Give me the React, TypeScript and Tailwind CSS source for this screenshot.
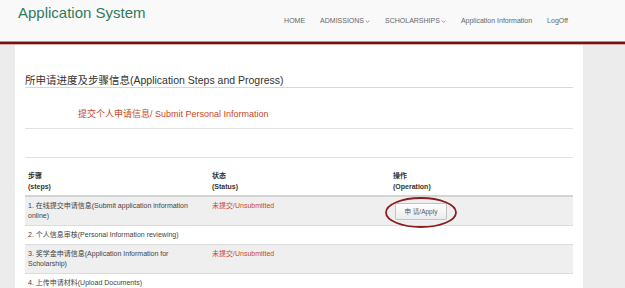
import React from "react";

const font = {
  fontFamily: '"Liberation Sans", Arial, "Noto Sans CJK SC", sans-serif',
};

const navItems = [
  { label: "HOME", caret: false },
  { label: "ADMISSIONS", caret: true },
  { label: "SCHOLARSHIPS", caret: true },
  { label: "Application Information", caret: false },
  { label: "LogOff", caret: false },
];

const rows = [
  {
    step: "1. 在线提交申请信息(Submit application information online)",
    status: "未提交/Unsubmitted",
    action: true,
  },
  { step: "2. 个人信息审核(Personal Information reviewing)", status: "", action: false },
  {
    step: "3. 奖学金申请信息(Application Information for Scholarship)",
    status: "未提交/Unsubmitted",
    action: false,
  },
  { step: "4. 上传申请材料(Upload Documents)", status: "", action: false },
];

function Caret() {
  return (
    <svg viewBox="0 0 8 5" className="ml-[1px] inline-block h-[3px] w-[5px] align-middle">
      <path d="M1 1l3 3 3-3" fill="none" stroke="#777" strokeWidth="1.2" />
    </svg>
  );
}

export default function App() {
  return (
    <div className="h-[288px] w-[625px] overflow-hidden bg-white" style={font}>
      <header className="flex h-[41px] items-start justify-between bg-[#f9f9f9] pl-[18px] pr-[57px]">
        <h1 className="mt-[4px] text-[15px] leading-[17px] text-[#2e7a5c]">Application System</h1>
        <nav className="mt-[16px] flex gap-[15px] text-[7px] leading-[9px] text-[#666]">
          {navItems.map((item) => (
            <span key={item.label} className="whitespace-nowrap">
              {item.label}
              {item.caret && <Caret />}
            </span>
          ))}
        </nav>
      </header>
      <div className="h-[1px] bg-[#c98787]" />
      <div className="h-[2px] bg-[#6e1414]" />
      <div className="h-[1px] bg-[#dfa9a9]" />

      <div className="flex h-full">
        <div className="w-[15px] bg-[#ececec]" />
        <main className="w-[568px] bg-white px-[10px]">
          <h2 className="mt-[28px] border-b border-[#d8d8d8] text-[10.5px] leading-[14px] text-[#333]">
            所申请进度及步骤信息(Application Steps and Progress)
          </h2>
          <div className="border-b border-[#e2e2e2] pb-[8px] pl-[53px] pt-[20px] text-[9px] leading-[12px] text-[#c9472a]">
            提交个人申请信息/ Submit Personal Information
          </div>
          <div className="h-[29px] border-b border-[#e2e2e2]" />

          <div className="grid grid-cols-[184px_181px_1fr] border-b-2 border-[#d4d4d4] pb-[3px] pt-[12px] text-[7px] font-bold leading-[11px] text-[#333]">
            <div className="pl-[3px]">
              步骤
              <br />
              (steps)
            </div>
            <div className="pl-[3px]">
              状态
              <br />
              (Status)
            </div>
            <div className="pl-[3px]">
              操作
              <br />
              (Operation)
            </div>
          </div>

          {rows.map((row, index) => (
            <div
              key={row.step}
              className={`grid grid-cols-[184px_181px_1fr] border-b border-[#dcdcdc] py-[4px] text-[7px] leading-[10px] text-[#444] ${
                index % 2 === 0 ? "bg-[#efefef]" : "bg-white"
              }`}
            >
              <div className="pl-[3px] pr-[6px]">{row.step}</div>
              <div className="pl-[3px] text-[#c9472a]">{row.status}</div>
              <div className="flex items-center pl-[5px]">
                {row.action && (
                  <div className="relative">
                    <button
                      type="button"
                      className="h-[17px] w-[52px] rounded-[2px] border border-[#c4c4c4] bg-gradient-to-b from-white to-[#ececec] text-[6.5px] leading-[15px] text-[#555]"
                    >
                      申 请/Apply
                    </button>
                    <svg
                      viewBox="0 0 72 31"
                      className="pointer-events-none absolute left-[-10px] top-[-6px] h-[31px] w-[72px]"
                    >
                      <ellipse cx="36" cy="15.5" rx="35" ry="14.5" fill="none" stroke="#8a1d1d" strokeWidth="1.8" />
                    </svg>
                  </div>
                )}
              </div>
            </div>
          ))}
        </main>
        <div className="flex-1 bg-[#ececec]" />
      </div>
    </div>
  );
}
